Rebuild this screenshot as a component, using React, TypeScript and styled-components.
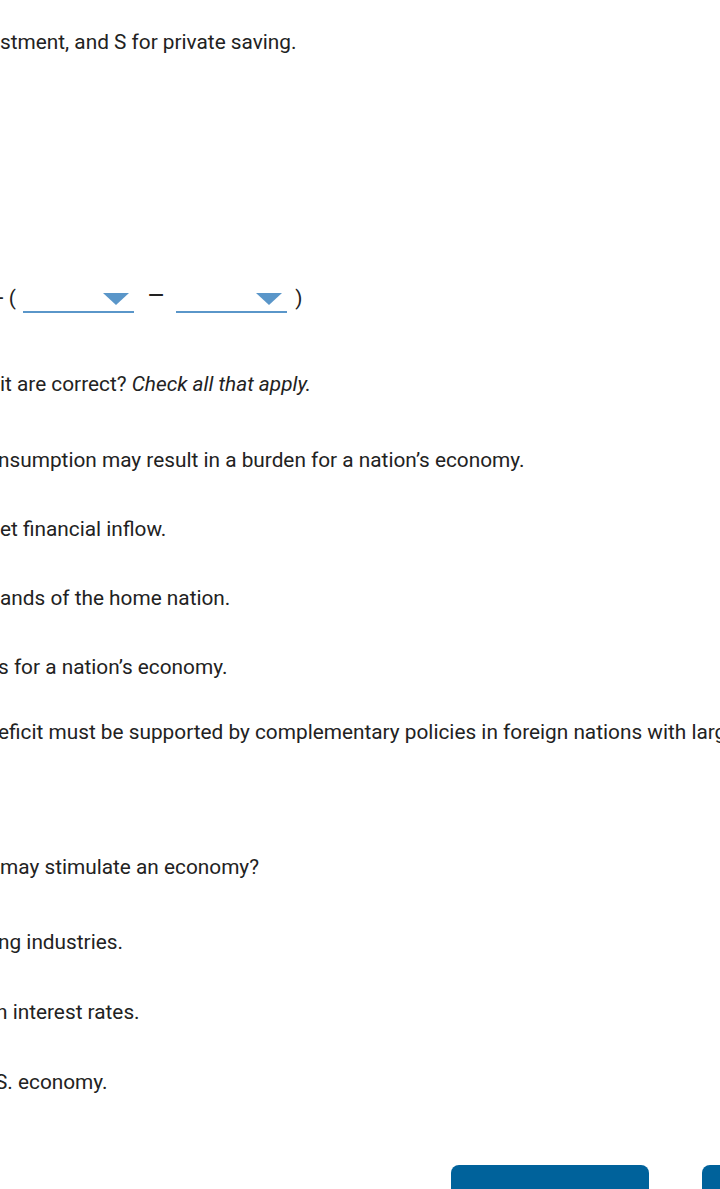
import React from 'react'
import styled, { createGlobalStyle } from 'styled-components'

const GlobalStyle = createGlobalStyle`
  html, body {
    margin: 0;
    padding: 0;
    background: #fff;
    overflow: hidden;
  }
  body {
    font-family: Roboto, "Liberation Sans", Arial, sans-serif;
    color: #222;
  }
`

const Page = styled.main`
  width: 1000px;
  height: 1189px;
  overflow: hidden;
  font-size: 20.8px;
  line-height: 26px;
`

const Line = styled.p<{ $cut?: number; $top: number }>`
  margin: ${(p) => p.$top}px 0 0 ${(p) => -(p.$cut ?? 0)}px;
  white-space: nowrap;
`

const Equation = styled.div`
  display: flex;
  align-items: flex-end;
  height: 36px;
  margin: 222px 0 0 -8px;
`

const Symbol = styled.span<{ $gap: number }>`
  margin-left: ${(p) => p.$gap}px;
  line-height: 26px;
  padding-bottom: 2px;
`

const Minus = styled(Symbol)`
  font-size: 28px;
  line-height: 28px;
  padding-bottom: 3px;
`

const DropdownBox = styled.span<{ $gap: number }>`
  position: relative;
  display: inline-block;
  width: 111px;
  height: 30px;
  margin-left: ${(p) => p.$gap}px;
  border-bottom: 2px solid #5a96c9;
`

const Caret = styled.svg`
  position: absolute;
  right: 5px;
  top: 12px;
`

const Dropdown = ({ gap }: { gap: number }) => (
  <DropdownBox $gap={gap}>
    <Caret width="26" height="12" viewBox="0 0 26 12">
      <polygon points="0,0 26,0 13,12" fill="#5a96c9" />
    </Caret>
  </DropdownBox>
)

const Buttons = styled.div`
  display: flex;
  gap: 53px;
  margin: 70px 0 0 451px;
`

const Button = styled.button<{ $width: number }>`
  width: ${(p) => p.$width}px;
  height: 48px;
  border: none;
  border-radius: 8px;
  background: #00629b;
  color: #fff;
  font-family: Roboto, "Liberation Sans", Arial, sans-serif;
  font-size: 20px;
  font-weight: 500;
  padding: 15px 0 0;
  text-align: center;
  flex: none;
`

export default function App() {
  return (
    <>
      <GlobalStyle />
      <Page>
        <Line $top={29}>stment, and S for private saving.</Line>
        <Equation>
          <Symbol $gap={0}>+</Symbol>
          <Symbol $gap={5}>(</Symbol>
          <Dropdown gap={7} />
          <Minus $gap={13}>–</Minus>
          <Dropdown gap={11} />
          <Symbol $gap={8}>)</Symbol>
        </Equation>
        <Line $top={58}>
          it are correct? <em>Check all that apply.</em>
        </Line>
        <Line $top={50} $cut={2}>nsumption may result in a burden for a nation’s economy.</Line>
        <Line $top={43}>et financial inflow.</Line>
        <Line $top={43}>ands of the home nation.</Line>
        <Line $top={43} $cut={2}>s for a nation’s economy.</Line>
        <Line $top={39} $cut={2}>eficit must be supported by complementary policies in foreign nations with large</Line>
        <Line $top={109}>may stimulate an economy?</Line>
        <Line $top={49} $cut={2}>ng industries.</Line>
        <Line $top={44} $cut={4}>n interest rates.</Line>
        <Line $top={44} $cut={5}>S. economy.</Line>
        <Buttons>
          <Button $width={198}>Check My Work</Button>
          <Button $width={198}>Next</Button>
        </Buttons>
      </Page>
    </>
  )
}
